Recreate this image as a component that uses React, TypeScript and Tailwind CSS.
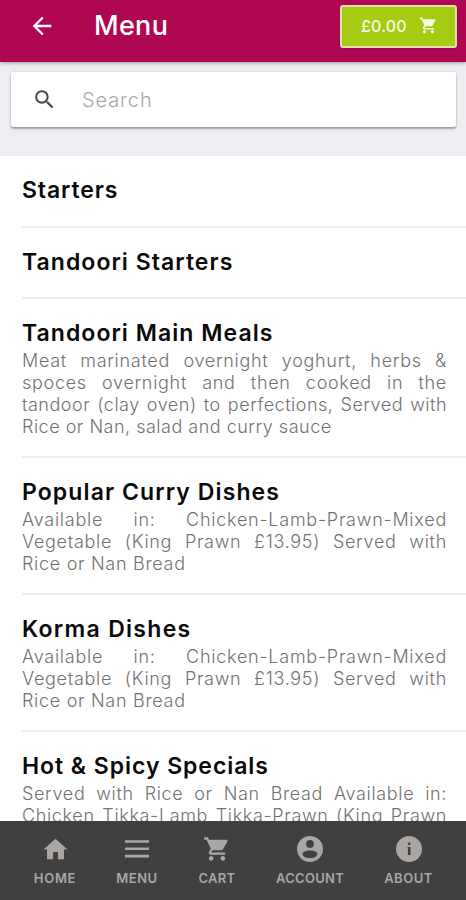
import React from 'react';
import { MdArrowBack, MdHome, MdSearch, MdShoppingCart } from 'react-icons/md';

interface Line {
  text: string;
  spacing: string;
  justify?: boolean;
}

interface Category {
  title: string;
  titleClass: string;
  height: string;
  lines: Line[];
}

const AVAILABLE_LINES: Line[] = [
  { text: 'Available in: Chicken-Lamb-Prawn-Mixed', spacing: 'tracking-[0.75px]', justify: true },
  { text: 'Vegetable (King Prawn £13.95) Served with', spacing: 'tracking-[0.7px]', justify: true },
  { text: 'Rice or Nan Bread', spacing: 'tracking-[0.7px]' },
];

const CATEGORIES: Category[] = [
  { title: 'Starters', titleClass: 'tracking-[0.9px]', height: 'h-[72px]', lines: [] },
  { title: 'Tandoori Starters', titleClass: 'tracking-[1.05px]', height: 'h-[71px]', lines: [] },
  {
    title: 'Tandoori Main Meals',
    titleClass: 'tracking-[1.05px]',
    height: 'h-[159px]',
    lines: [
      { text: 'Meat marinated overnight yoghurt, herbs &', spacing: 'tracking-[0.7px]', justify: true },
      { text: 'spoces overnight and then cooked in the', spacing: 'tracking-[0.7px]', justify: true },
      { text: 'tandoor (clay oven) to perfections, Served with', spacing: 'tracking-[0.5px]', justify: true },
      { text: 'Rice or Nan, salad and curry sauce', spacing: 'tracking-[0.5px]' },
    ],
  },
  { title: 'Popular Curry Dishes', titleClass: 'tracking-[1.1px]', height: 'h-[137px]', lines: AVAILABLE_LINES },
  { title: 'Korma Dishes', titleClass: 'tracking-[1.3px]', height: 'h-[137px]', lines: AVAILABLE_LINES },
  {
    title: 'Hot & Spicy Specials',
    titleClass: 'tracking-[0.95px]',
    height: 'h-[137px]',
    lines: [
      { text: 'Served with Rice or Nan Bread Available in:', spacing: 'tracking-[0.65px]', justify: true },
      { text: 'Chicken Tikka-Lamb Tikka-Prawn (King Prawn', spacing: 'tracking-[0.65px]', justify: true },
    ],
  },
];

const MenuIcon = () => (
  <svg viewBox="0 0 26 26" className="w-[26px] h-[26px]" fill="currentColor">
    <path d="M1 4.2h24v2.6H1zM1 11.5h24v2.6H1zM1 18.8h24v2.6H1z" />
  </svg>
);

const AccountIcon = () => (
  <svg viewBox="0 0 26 26" className="w-[26px] h-[26px]" fill="currentColor">
    <path
      fillRule="evenodd"
      d="M13 0a13 13 0 1 0 0 26a13 13 0 0 0 0-26zM13 4a3.9 3.9 0 1 1 0 7.8a3.9 3.9 0 0 1 0-7.8zM13 14.4c4.3 0 7.4 1.5 7.4 3.5c0 2.3-3.3 4.1-7.4 4.1s-7.4-1.8-7.4-4.1c0-2 3.1-3.5 7.4-3.5z"
    />
  </svg>
);

const InfoIcon = () => (
  <svg viewBox="0 0 26 26" className="w-[26px] h-[26px]" fill="currentColor">
    <path
      fillRule="evenodd"
      d="M13 0a13 13 0 1 0 0 26a13 13 0 0 0 0-26zM13.2 6.4a1.4 1.4 0 1 1 0 2.8a1.4 1.4 0 0 1 0-2.8zM11.4 10.9h3.1v8.1h-2.6v-7.3h-0.5z"
    />
  </svg>
);

const TABS = [
  { label: 'HOME', icon: <MdHome className="w-[29px] h-[29px]" />, width: 'w-[84px]', tracking: 'tracking-[0.7px]' },
  { label: 'MENU', icon: <MenuIcon />, width: 'w-[80px]', tracking: 'tracking-[0.5px]' },
  { label: 'CART', icon: <MdShoppingCart className="w-[28px] h-[28px]" />, width: 'w-[80px]', tracking: 'tracking-[0.3px]' },
  { label: 'ACCOUNT', icon: <AccountIcon />, width: 'w-[106px]', tracking: 'tracking-[0.3px]' },
  { label: 'ABOUT', icon: <InfoIcon />, width: 'w-[91px]', tracking: 'tracking-[0.5px]' },
];

const CategoryRow: React.FC<{ category: Category }> = ({ category }) => (
  <li className={`${category.height} shrink-0 ml-[22px] pt-5 border-b-2 border-[#eeeeef]`}>
    <h2 className={`w-fit text-[23px] leading-7 font-semibold text-[#0a0a0a] whitespace-nowrap ${category.titleClass}`}>
      {category.title}
    </h2>
    <div className="mt-[3px] w-[425px] text-[18px] leading-[22px] font-light text-[#727272]">
      {category.lines.map((line) => (
        <p
          key={line.text}
          className={`${line.spacing} ${line.justify ? '[text-align:justify] [text-align-last:justify]' : 'w-fit whitespace-nowrap'}`}
        >
          {line.text}
        </p>
      ))}
    </div>
  </li>
);

export default function App() {
  return (
    <div className="w-[466px] h-[900px] flex flex-col overflow-hidden bg-white font-['Inter',sans-serif]">
      <header className="relative z-10 h-[62px] shrink-0 flex items-start bg-[#b00752] text-white shadow-[0_1px_4px_rgba(0,0,0,0.35)]">
        <button className="ml-[28px] mt-[12px]" aria-label="Back">
          <MdArrowBack className="w-[28px] h-[28px]" />
        </button>
        <h1 className="ml-[38px] mt-[9px] text-[27px] leading-[34px] font-medium tracking-[0.3px]">Menu</h1>
        <button className="ml-auto mr-[9px] mt-[5px] w-[117px] h-[43px] flex items-center pb-[2px] pl-[19px] rounded-[3px] border-2 border-[#e4dfae] bg-[#a5cc12] text-[#f8fbe4] shadow-sm">
          <span className="text-[16px] leading-5 font-medium tracking-[0.2px]">£0.00</span>
          <MdShoppingCart className="ml-[12px] w-[19px] h-[19px]" />
        </button>
      </header>

      <div className="h-[94px] shrink-0 bg-[#eeedf2] pt-[10px] pl-[11px] pr-[10px]">
        <div className="h-[55px] flex items-center rounded-[2px] bg-white pl-[21px] shadow-[0_2px_2px_rgba(0,0,0,0.3),0_0_3px_rgba(0,0,0,0.12)]">
          <MdSearch className="w-[25px] h-[25px] text-[#4a4a4a]" />
          <span className="ml-[25px] text-[20px] leading-6 font-light text-[#a8a8a8] tracking-[0.9px]">Search</span>
        </div>
      </div>

      <ul className="flex-1 min-h-0 flex flex-col overflow-hidden">
        {CATEGORIES.map((category) => (
          <CategoryRow key={category.title} category={category} />
        ))}
      </ul>

      <nav className="h-[79px] shrink-0 flex pl-[13px] bg-[#404040] text-[#aaa6a4]">
        {TABS.map((tab) => (
          <a key={tab.label} className={`${tab.width} flex flex-col items-center`}>
            <span className="mt-[13px] h-[30px] flex items-center">{tab.icon}</span>
            <span className={`mt-[6px] text-[13px] leading-4 font-semibold ${tab.tracking}`}>{tab.label}</span>
          </a>
        ))}
      </nav>
    </div>
  );
}
